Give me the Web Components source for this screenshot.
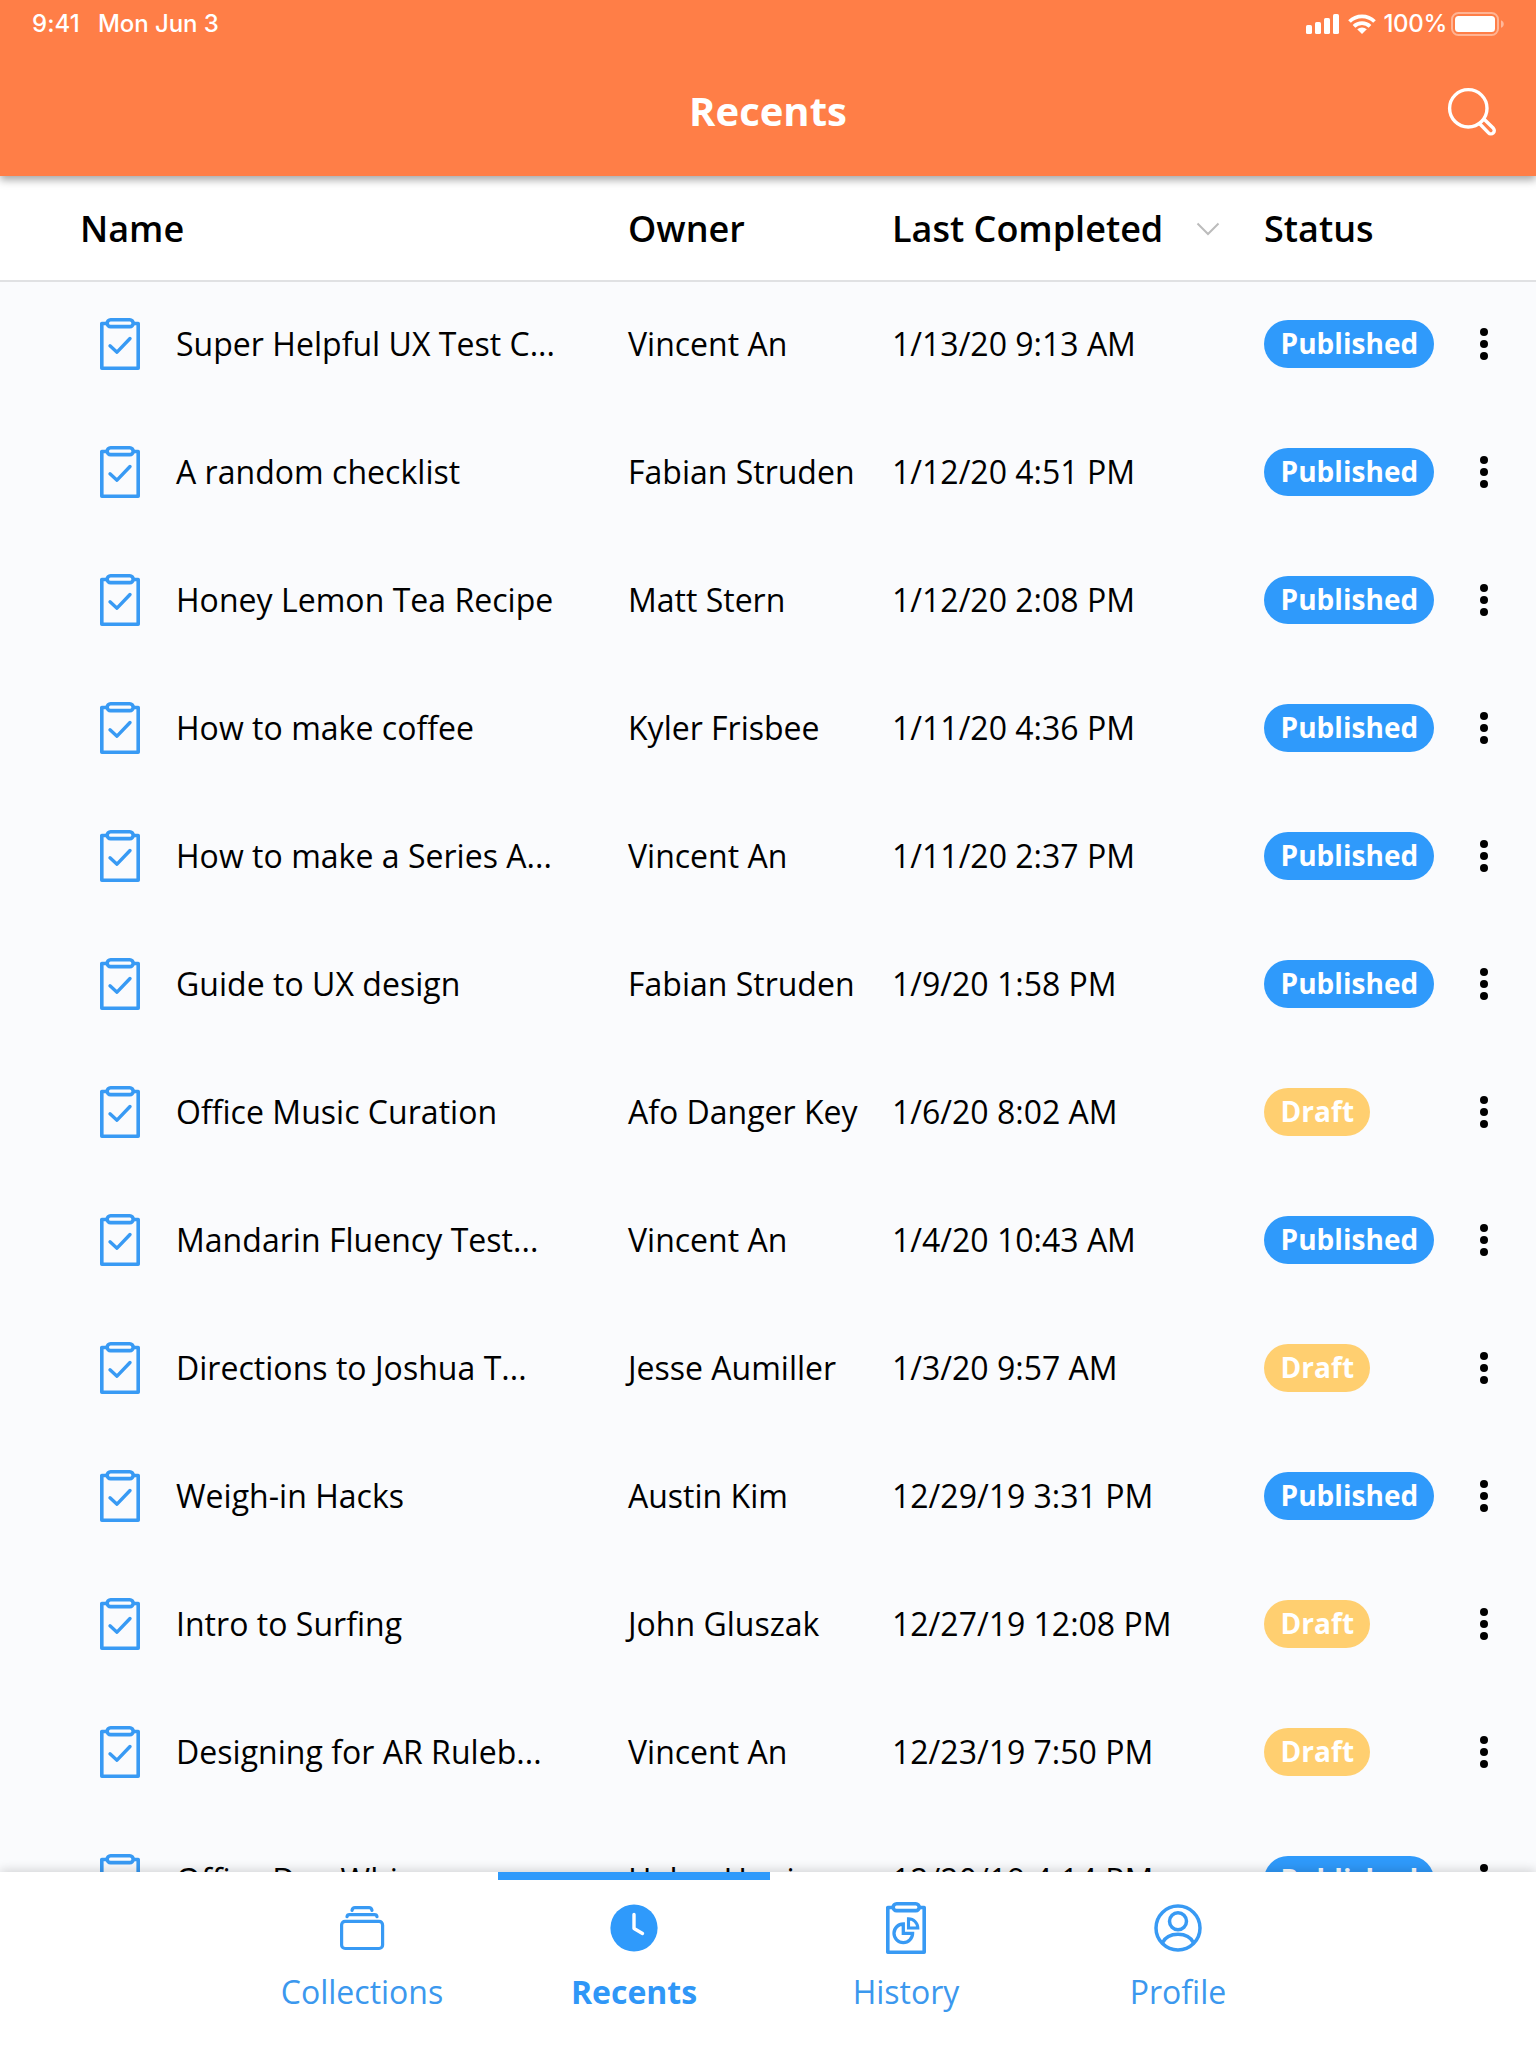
<!DOCTYPE html>
<html lang="en">
<head>
<meta charset="utf-8">
<title>Recents</title>
<style>
html,body{margin:0;padding:0}
body{width:1536px;height:2048px;overflow:hidden;background:#fafbfd;font-family:"Open Sans",sans-serif}
</style>
</head>
<body>
<recents-app></recents-app>
<script>
const define = (name, html, setup) => customElements.define(name, class extends HTMLElement {
  connectedCallback() {
    if (this.shadowRoot) return;
    this.attachShadow({ mode: 'open' }).innerHTML = html;
    if (setup) setup(this, this.shadowRoot);
  }
});

const CLIP = '<g fill="none" stroke="#389af4" stroke-width="3.6"><path d="M7 5.5H1.8V50.2H38.2V5.5H33" stroke-linejoin="round"/><rect x="7.2" y="1.8" width="26" height="6.8" rx="3.4"/>';
const ICONS = {
  check: ['40', '52', CLIP + '<path d="M10 27.8L17 34.2L30 20.5" stroke-width="3.4" stroke-linecap="round" stroke-linejoin="round"/></g>'],
  history: ['40', '52', CLIP + '<path stroke-width="3.3" d="M17.3 22A9.3 9.3 0 1 0 26.6 31.3H17.3Z"/><path stroke-width="3.1" d="M22.5 16.8V26H31.8A9.3 9.3 0 0 0 22.5 16.8Z"/></g>'],
  collections: ['44', '44', '<g fill="none" stroke="#389af4" stroke-width="3.2" stroke-linecap="round"><rect x="1.6" y="15.4" width="41" height="27.1" rx="3.5"/><path d="M7 10.7C7.2 9.2 8 8.6 9.5 8.6H34.5C36 8.6 36.8 9.2 37 10.7M12 4.4C12.4 2.4 13.2 1.7 15 1.7H29C30.8 1.7 31.6 2.4 32 4.4"/></g>'],
  clock: ['48', '48', '<circle cx="24" cy="24" r="23.6" fill="#2f9afb"/><path d="M24 10.5V24.5L32.5 29.5" fill="none" stroke="#fff" stroke-width="3.4" stroke-linecap="round" stroke-linejoin="round"/>'],
  profile: ['48', '48', '<g fill="none" stroke="#389af4" stroke-width="3.5"><circle cx="24" cy="24" r="22"/><circle cx="24" cy="17.3" r="8.5"/><path d="M8.3 39C11 33.5 17 30.3 24 30.3S37 33.5 39.7 39"/></g>'],
  search: ['48', '48', '<g fill="none" stroke="#fff" stroke-width="3.4"><circle cx="20.3" cy="20.3" r="18.7"/><path d="M31.2 35.2L40.5 44.8A3.1 3.1 0 0 0 45.4 40.3L35.6 30.7"/></g>'],
  chevron: ['24', '14', '<path d="M1.5 1.5L12 12L22.5 1.5" fill="none" stroke="#bcbcbc" stroke-width="2"/>'],
  more: ['8', '32', '<circle cx="4" cy="4" r="4"/><circle cx="4" cy="16" r="4"/><circle cx="4" cy="28" r="4"/>'],
  signal: ['34', '20', '<g fill="#fff"><rect y="11" width="6" height="9" rx="1.6"/><rect x="9" y="8" width="6" height="12" rx="1.6"/><rect x="18" y="4" width="6" height="16" rx="1.6"/><rect x="27" width="6" height="20" rx="1.6"/></g>'],
  wifi: ['28', '20', '<g fill="none" stroke="#fff" stroke-width="3.8"><path d="M1.5 7.5A18 18 0 0 1 26.5 7.5"/><path d="M6 12.4A11.5 11.5 0 0 1 22 12.4"/></g><path d="M14 20L9.2 15.3A7 7 0 0 1 18.8 15.3Z" fill="#fff"/>'],
  battery: ['53', '24', '<rect x="1" y="1" width="46" height="22" rx="6.5" fill="none" stroke="#fff" stroke-opacity=".42" stroke-width="2"/><rect x="4" y="4" width="40" height="16" rx="3.5" fill="#fff"/><path d="M50 8.2C53.7 9.5 53.7 14.5 50 15.8Z" fill="#fff" fill-opacity=".45"/>']
};
define('ui-icon', '<style>:host{display:block;flex:none}svg{display:block;overflow:visible}</style>', (el, root) => {
  const [w, h, body] = ICONS[el.getAttribute('name')];
  root.innerHTML += `<svg width="${w}" height="${h}" viewBox="0 0 ${w} ${h}">${body}</svg>`;
});

define('status-bar', `<style>
:host{display:flex;height:48px;box-sizing:border-box;padding:0 32px;align-items:center;color:#fff;font:500 24px/48px Inter,sans-serif}
.time{letter-spacing:.1px}.date{margin-left:18px;letter-spacing:-.05px}.right{margin-left:auto;display:flex;align-items:center}
ui-icon[name=wifi]{margin:0 7px 0 8px}.pct{letter-spacing:-.3px;margin-right:4px}
</style><span class="time">9:41</span><span class="date">Mon Jun 3</span>
<div class="right"><ui-icon name="signal"></ui-icon><ui-icon name="wifi"></ui-icon><span class="pct">100%</span><ui-icon name="battery"></ui-icon></div>`);

define('app-header', `<style>
:host{display:block;height:176px;flex:none;background:#ff7e47;box-shadow:0 4px 8px rgba(0,0,0,.35);z-index:2;color:#fff}
.bar{display:grid;grid-template-columns:1fr auto 1fr;align-items:center;height:128px;padding:0 40px}
h1{grid-column:2;margin:0;padding-bottom:2px;font:700 40px/54px "Open Sans",sans-serif}
ui-icon{justify-self:end}
</style><status-bar></status-bar><div class="bar"><h1><slot></slot></h1><ui-icon name="search"></ui-icon></div>`);

define('table-head', `<style>
:host{display:grid;grid-template-columns:548px 264px 372px 1fr;align-items:center;height:106px;flex:none;box-sizing:border-box;padding:2px 0 0 80px;background:#fff;border-bottom:2px solid #e0e1e3;font:600 36px/50px "Open Sans",sans-serif;color:#000}
.sort{display:flex;align-items:center;gap:33px}
</style><span>Name</span><span>Owner</span><span class="sort">Last Completed<ui-icon name="chevron"></ui-icon></span><span>Status</span>`);

define('status-pill', `<style>
:host{display:block;width:max-content;height:48px;box-sizing:border-box;padding:0 16px 0 16.5px;border-radius:24px;background:#2f9afb;color:#fff;font:700 28px/47px "Open Sans",sans-serif;letter-spacing:.05px}
:host([kind=Draft]){background:#ffcf70}
</style><slot></slot>`);

define('checklist-row', `<style>
:host{display:grid;grid-template-columns:76px 452px 264px 372px 216px 1fr;align-items:center;height:128px;flex:none;box-sizing:border-box;padding-left:100px;font:400 32px/44px "Open Sans",sans-serif;color:#000;white-space:nowrap}
::slotted([slot=title]){letter-spacing:.03px}
</style><ui-icon name="check"></ui-icon><slot name="title"></slot><slot name="owner"></slot><slot name="date"></slot><slot name="status"></slot><ui-icon name="more"></ui-icon>`);

define('nav-tab', `<style>
:host{display:flex;flex-direction:column;align-items:center;width:272px;height:176px;box-sizing:border-box;border-top:8px solid transparent;color:#3b98ee;font:400 32px/44px "Open Sans",sans-serif}
:host([active]){border-color:#2f9afb;font-weight:700;color:#2f97f7}
.icon{height:96px;margin-bottom:-6px;display:flex;align-items:center}
</style><div class="icon"></div><slot></slot>`, (el, root) => {
  root.querySelector('.icon').innerHTML = `<ui-icon name="${el.getAttribute('icon')}"></ui-icon>`;
});

define('bottom-nav', `<style>
:host{display:flex;height:176px;flex:none;box-sizing:border-box;padding-left:226px;background:#fff;box-shadow:0 -2px 10px rgba(0,0,0,.16);z-index:2}
</style><nav-tab icon="collections">Collections</nav-tab><nav-tab icon="clock" active>Recents</nav-tab><nav-tab icon="history">History</nav-tab><nav-tab icon="profile">Profile</nav-tab>`);

const ROWS = [
  ['Super Helpful UX Test C...', 'Vincent An', '1/13/20 9:13 AM', 'Published'],
  ['A random checklist', 'Fabian Struden', '1/12/20 4:51 PM', 'Published'],
  ['Honey Lemon Tea Recipe', 'Matt Stern', '1/12/20 2:08 PM', 'Published'],
  ['How to make coffee', 'Kyler Frisbee', '1/11/20 4:36 PM', 'Published'],
  ['How to make a Series A...', 'Vincent An', '1/11/20 2:37 PM', 'Published'],
  ['Guide to UX design', 'Fabian Struden', '1/9/20 1:58 PM', 'Published'],
  ['Office Music Curation', 'Afo Danger Key', '1/6/20 8:02 AM', 'Draft'],
  ['Mandarin Fluency Test...', 'Vincent An', '1/4/20 10:43 AM', 'Published'],
  ['Directions to Joshua T...', 'Jesse Aumiller', '1/3/20 9:57 AM', 'Draft'],
  ['Weigh-in Hacks', 'Austin Kim', '12/29/19 3:31 PM', 'Published'],
  ['Intro to Surfing', 'John Gluszak', '12/27/19 12:08 PM', 'Draft'],
  ['Designing for AR Ruleb...', 'Vincent An', '12/23/19 7:50 PM', 'Draft'],
  ['Office Dog Whisp...', 'Helen Huning', '12/20/19 4:14 PM', 'Published']
];
define('recents-app', `<style>
:host{display:flex;flex-direction:column;width:1536px;height:2048px;overflow:hidden;background:#fafbfd}
main{flex:1;min-height:0;overflow:hidden;margin-top:-2px}
table-head{z-index:1}
</style><app-header>Recents</app-header><table-head></table-head><main></main><bottom-nav></bottom-nav>`, (el, root) => {
  root.querySelector('main').innerHTML = ROWS.map(([t, o, d, s]) =>
    `<checklist-row><span slot="title">${t}</span><span slot="owner">${o}</span><span slot="date">${d}</span><status-pill slot="status" kind="${s}">${s}</status-pill></checklist-row>`).join('');
});
</script>
</body>
</html>
